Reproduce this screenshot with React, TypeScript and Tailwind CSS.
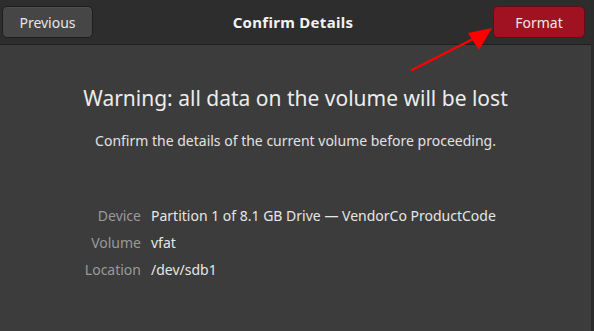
import React from 'react';

const details = [
  { label: "Device", value: "Partition 1 of 8.1 GB Drive — VendorCo ProductCode" },
  { label: "Volume", value: "vfat" },
  { label: "Location", value: "/dev/sdb1" }
];

const App: React.FC = () => {
  return (
    <div className="relative w-[594px] h-[331px] flex bg-[#2b2b2b] overflow-hidden font-['Noto_Sans',sans-serif]">
      <div className="w-[591px] flex flex-col">
        {/* Header bar */}
        <div className="h-[45px] shrink-0 flex items-center justify-between pl-[2px] pr-[6px] bg-[#2d2d2d] border-b border-[#1f1f1f]">
          <button className="w-[91px] h-[32px] rounded-[5px] bg-[#464646] border border-[#1e1e1e] text-[14px] text-[#e6e6e6] shadow-[inset_0_1px_0_rgba(255,255,255,0.04)]">
            Previous
          </button>
          <div className="text-[15px] font-bold tracking-[0.3px] text-[#f2f2f2]">Confirm Details</div>
          <button className="w-[92px] h-[32px] rounded-[5px] bg-[#a01122] border border-[#6a0a15] text-[14px] text-[#f0e6e6]">
            Format
          </button>
        </div>

        {/* Body */}
        <div className="flex-1 bg-[#3c3c3c] flex flex-col items-center pt-[38px]">
          <h1 className="text-[21px] text-[#ececec] leading-[30px]">Warning: all data on the volume will be lost</h1>
          <p className="mt-[18px] text-[14px] text-[#e2e2e2] leading-[20px]">
            Confirm the details of the current volume before proceeding.
          </p>

          <div className="self-start ml-[82px] mt-[55px] grid grid-cols-[59px_auto] gap-x-[10px] gap-y-[7px] text-[14px] leading-[20px]">
            {details.map((d) => (
              <React.Fragment key={d.label}>
                <div className="text-right text-[#9a9a9a] whitespace-nowrap">{d.label}</div>
                <div className="text-[#e6e6e6]">{d.value}</div>
              </React.Fragment>
            ))}
          </div>
        </div>
      </div>

      {/* Annotation arrow */}
      <svg className="absolute left-0 top-0 pointer-events-none" width="594" height="331" viewBox="0 0 594 331">
        <line x1="412" y1="70" x2="475" y2="38" stroke="#ff0000" strokeWidth="2.5" strokeLinecap="round" />
        <polygon points="492,28 468,33 479,50" fill="#ff0000" />
      </svg>
    </div>
  );
};

export default App;
